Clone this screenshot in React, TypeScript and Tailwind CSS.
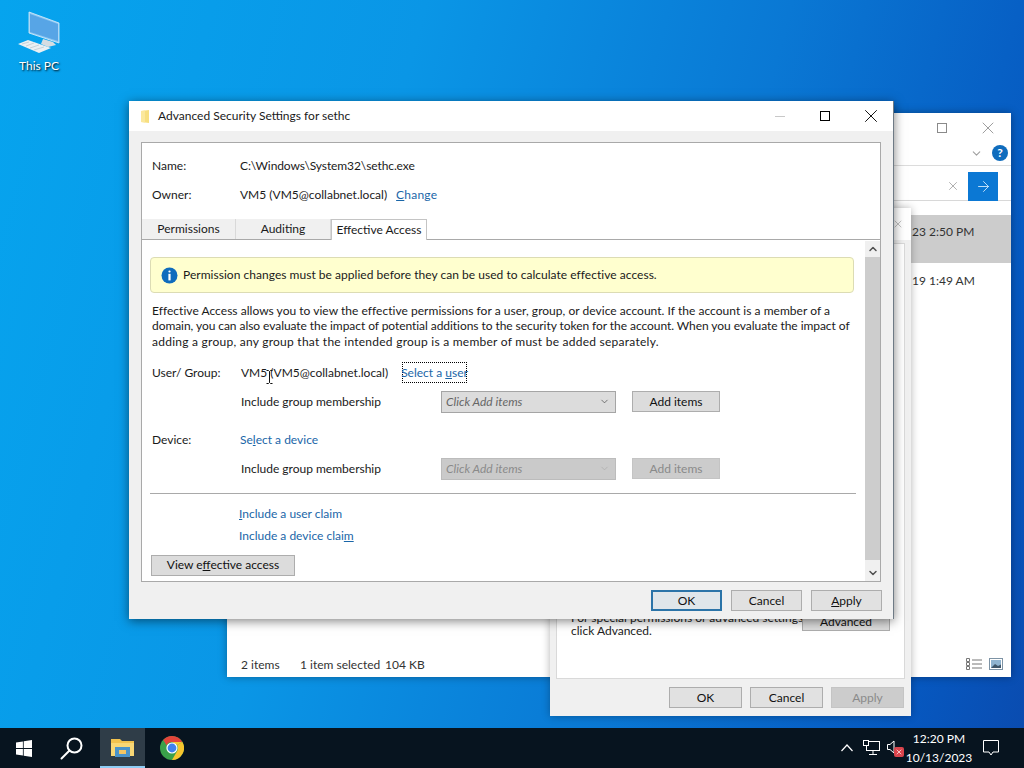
import React from 'react';
import { ArrowRight, ChevronDown, ChevronUp, X } from 'lucide-react';

type Tone = 'normal' | 'soft' | 'disabled' | 'focused';

const toneClasses: Record<Tone, string> = {
  normal: 'border border-[#adadad] bg-[#e1e1e1] text-[#111]',
  soft: 'border border-[#adadad] bg-[#dcdcdc] text-[#111]',
  disabled: 'border border-[#c4c4c4] bg-[#cccccc] text-[#8a8a8a]',
  focused: 'border-2 border-[#2b74a8] bg-[#dfe6ea] text-[#111]',
};

function WinButton({
  children,
  tone = 'normal',
  className = '',
}: {
  children: React.ReactNode;
  tone?: Tone;
  className?: string;
}) {
  return <div className={`flex items-center justify-center ${toneClasses[tone]} ${className}`}>{children}</div>;
}

function InfoIcon() {
  return (
    <svg width="17" height="17" viewBox="0 0 17 17">
      <circle cx="8.5" cy="8.5" r="8" fill="#0f6cbd" />
      <rect x="7.4" y="3.4" width="2.2" height="2.2" rx="1" fill="#fff" />
      <rect x="7.4" y="6.8" width="2.2" height="6.6" fill="#fff" />
    </svg>
  );
}

function ComboBox({ disabled = false }: { disabled?: boolean }) {
  return (
    <div
      className={`flex h-[22px] w-[175px] items-center justify-between border pl-[4px] pr-[5px] italic ${
        disabled ? 'border-[#bcbcbc] bg-[#cacaca] text-[#8a8a8a]' : 'border-[#a5a5a5] bg-[#dcdcdc] text-[#666]'
      }`}
    >
      <span>Click Add items</span>
      <ChevronDown size={11} strokeWidth={1.5} className={disabled ? 'text-[#aaa]' : 'text-[#444]'} />
    </div>
  );
}

function PermissionRow({ disabled = false }: { disabled?: boolean }) {
  return (
    <div className="flex h-[22px] items-center pl-[99px]">
      <span className="w-[200px]">Include group membership</span>
      <ComboBox disabled={disabled} />
      <WinButton tone={disabled ? 'disabled' : 'soft'} className="ml-[16px] h-[21px] w-[88px]">
        Add items
      </WinButton>
    </div>
  );
}

function ThisPcIcon() {
  return (
    <svg width="46" height="42" viewBox="0 0 46 42">
      <path d="M12 1 L42 12 L42 32 L12 22 Z" fill="#8ec8f2" stroke="#dceefb" strokeWidth="0.8" />
      <path d="M13 3 L41 13 L41 30 L13 21 Z" fill="#57a5e6" />
      <path d="M26 28 L36 31 L39 34 L31 36 L24 33 Z" fill="#d5dde2" />
      <path d="M1 33 L11 29 L34 37 L22 42 Z" fill="#eaf0f3" />
      <path d="M5 33 L12 31 M9 35 L17 32 M13 37 L22 34 M17 39 L27 36" stroke="#b8c4cc" strokeWidth="0.7" />
    </svg>
  );
}

function ExplorerWindow() {
  return (
    <div className="absolute left-[227px] top-[113px] flex h-[564px] w-[784px] flex-col bg-white text-[#333] shadow-[0_0_8px_rgba(0,0,0,0.35)]">
      {/* Title bar */}
      <div className="flex h-[29px] items-center justify-end">
        <div className="mr-[13px] flex items-center gap-[31px] text-[#8a8a8a]">
          <div className="h-[10px] w-[10px] border border-[#8a8a8a]" />
          <X size={20} strokeWidth={1} />
        </div>
      </div>
      {/* Ribbon */}
      <div className="flex h-[24px] items-center justify-end gap-[9px] border-b border-[#dcdcdc] pb-[1px] pr-[3px]">
        <ChevronDown size={13} className="text-[#a0a0a0]" />
        <div className="flex h-[16px] w-[16px] items-center justify-center rounded-full bg-[#0f6cbd] text-[12px] font-bold text-white">
          ?
        </div>
      </div>
      {/* Address bar */}
      <div className="mt-[6px] flex h-[29px] items-center justify-end border-b border-[#d8d8d8] pr-[13px]">
        <X size={14} strokeWidth={1.2} className="mr-[8px] text-[#8e8e8e]" />
        <div className="flex h-[29px] w-[30px] items-center justify-center bg-[#0b78d4] text-[#cfe8fb]">
          <ArrowRight size={17} strokeWidth={1.3} />
        </div>
      </div>
      {/* File rows */}
      <div className="mt-[14px] flex h-[48px] justify-end bg-[#cccccc]">
        <span className="w-[99px] pt-[9px] text-[12px] leading-[16px]">23 2:50 PM</span>
      </div>
      <div className="flex h-[26px] items-end justify-end">
        <span className="w-[99px] text-[12px] leading-[16px]">19 1:49 AM</span>
      </div>
      {/* Status bar */}
      <div className="mt-auto flex h-[24px] items-start whitespace-nowrap pl-[14px] pt-[3px] text-[12px]">
        <span className="w-[59px]">2 items</span>
        <span className="w-[85px]">1 item selected</span>
        <span>104 KB</span>
        <div className="ml-auto mr-[8px] flex items-center gap-[7px] pt-[2px]">
          <svg width="16" height="12" viewBox="0 0 16 12" fill="none" stroke="#777" strokeWidth="1">
            <path d="M0.5 0.5 H3.5 V3.5 H0.5 Z M0.5 4.5 H3.5 V7.5 H0.5 Z M0.5 8.5 H3.5 V11.5 H0.5 Z" />
            <path d="M6 2 H16 M6 6 H16 M6 10 H16" />
          </svg>
          <svg width="14" height="12" viewBox="0 0 14 12">
            <rect x="0.5" y="0.5" width="13" height="11" fill="#fff" stroke="#7d93a5" />
            <rect x="2" y="2" width="10" height="8" fill="#8fb3cf" />
            <path d="M2 10 L6 6 L9 8 L12 6.5 V10 Z" fill="#3f5568" />
          </svg>
        </div>
      </div>
    </div>
  );
}

function PropertiesWindow() {
  return (
    <div className="absolute left-[550px] top-[208px] flex h-[508px] w-[361px] flex-col bg-[#f0f0f0] text-[#222] shadow-[0_0_8px_rgba(0,0,0,0.3)]">
      <div className="flex h-[32px] items-center justify-end bg-white pr-[7px] text-[#999]">
        <X size={12} strokeWidth={1.2} />
      </div>
      <div className="mx-[6px] mt-[3px] flex flex-1 flex-col justify-end border border-[#d9d9d9] bg-white pb-[41px] pl-[14px] text-[12px] leading-[13px]">
        <div className="flex items-start justify-between pr-[14px]">
          <p className="w-[230px] whitespace-nowrap">
            For special permissions or advanced settings,
            <br />
            click Advanced.
          </p>
          <WinButton tone="soft" className="h-[20px] w-[88px]">
            Advanced
          </WinButton>
        </div>
      </div>
      <div className="flex h-[37px] items-start justify-end gap-[8px] pr-[7px] pt-[8px] text-[12px]">
        <WinButton className="h-[21px] w-[73px]">OK</WinButton>
        <WinButton className="h-[21px] w-[73px]">Cancel</WinButton>
        <WinButton tone="disabled" className="h-[21px] w-[73px]">
          Apply
        </WinButton>
      </div>
    </div>
  );
}

function SecurityDialog() {
  return (
    <div className="absolute left-[129px] top-[101px] flex h-[518px] w-[765px] flex-col border-r border-[#6e7a85] bg-[#f0f0f0] text-[12px] text-[#1a1a1a] shadow-[0_2px_10px_rgba(0,0,0,0.5)]">
      {/* Title bar */}
      <div className="flex h-[30px] items-center bg-white pl-[12px]">
        <svg width="8" height="13" viewBox="0 0 8 13">
          <path d="M0 1 L8 0 V13 L0 12 Z" fill="#f7df80" />
          <path d="M0 1 L4 0.5 V12.5 L0 12 Z" fill="#fbe89c" />
        </svg>
        <span className="ml-[9px]">Advanced Security Settings for sethc</span>
        <div className="ml-auto flex items-center pr-[11px]">
          <div className="h-px w-[10px] bg-[#c8c8c8]" />
          <div className="ml-[35px] h-[10px] w-[10px] border border-black" />
          <X size={22} strokeWidth={1} className="ml-[30px] text-black" />
        </div>
      </div>

      <div className="mx-[12px] mt-[11px] flex h-[440px] flex-col border border-[#a9a9a9] bg-white">
        {/* Name / owner */}
        <div className="mt-[13px] flex h-[20px] items-center pl-[10px]">
          <span className="w-[88px]">Name:</span>
          <span className="tracking-[-0.1px]">C:\Windows\System32\sethc.exe</span>
        </div>
        <div className="mt-[9px] flex h-[20px] items-center pl-[10px]">
          <span className="w-[88px]">Owner:</span>
          <span>VM5 (VM5@collabnet.local)</span>
          <span className="ml-[9px] tracking-[0.2px] text-[#1a66a8]">
            <u>C</u>hange
          </span>
        </div>

        {/* Tabs */}
        <div className="mt-[14px] flex h-[21px] border-b border-[#a9a9a9]">
          <div className="flex h-[20px] w-[94px] items-center justify-center border-r border-[#d9d9d9] bg-[#f0f0f0]">
            Permissions
          </div>
          <div className="flex h-[20px] w-[95px] items-center justify-center border-r border-[#d9d9d9] bg-[#f0f0f0]">
            Auditing
          </div>
          <div className="z-10 flex h-[21px] w-[96px] items-center justify-center border border-b-0 border-[#c4c4c4] bg-white">
            Effective Access
          </div>
        </div>

        <div className="flex min-h-0 flex-1">
          {/* Tab content */}
          <div className="min-w-0 flex-1">
            <div className="ml-[8px] mt-[17px] flex h-[36px] w-[704px] items-center rounded-[4px] border border-[#dcdcb4] bg-[#ffffcf] pl-[10px]">
              <InfoIcon />
              <span className="ml-[5px] tracking-[0.03px]">
                Permission changes must be applied before they can be used to calculate effective access.
              </span>
            </div>

            <div className="ml-[10px] mt-[10px] whitespace-nowrap leading-[15.3px]">
              <p className="tracking-[0.03px]">
                Effective Access allows you to view the effective permissions for a user, group, or device account. If the account is a member of a
              </p>
              <p className="tracking-[-0.06px]">
                domain, you can also evaluate the impact of potential additions to the security token for the account. When you evaluate the impact of
              </p>
              <p className="tracking-[0.25px]">
                adding a group, any group that the intended group is a member of must be added separately.
              </p>
            </div>

            <div className="mt-[13px] flex h-[22px] items-center pl-[10px]">
              <span className="w-[89px]">User/ Group:</span>
              <span className="w-[161px]">VM5 (VM5@collabnet.local)</span>
              <span className="flex h-[21px] w-[65px] items-center justify-center whitespace-pre border border-dotted border-black text-[#1a66a8]">
                Select a <u>u</u>ser
              </span>
            </div>
            <div className="mt-[7px]">
              <PermissionRow />
            </div>

            <div className="mt-[17px] flex h-[20px] items-center pl-[10px]">
              <span className="w-[88px]">Device:</span>
              <span className="text-[#1a66a8]">
                Se<u>l</u>ect a device
              </span>
            </div>
            <div className="mt-[8px]">
              <PermissionRow disabled />
            </div>

            <div className="ml-[8px] mt-[13px] h-px w-[706px] bg-[#a9a9a9]" />

            <div className="mt-[11px] flex h-[18px] items-center pl-[97px] text-[#1a66a8]">
              <span>
                <u>I</u>nclude a user claim
              </span>
            </div>
            <div className="mt-[4px] flex h-[18px] items-center pl-[97px] text-[#1a66a8]">
              <span>
                Include a device clai<u>m</u>
              </span>
            </div>
            <WinButton tone="soft" className="ml-[9px] mt-[10px] h-[21px] w-[144px]">
              <span>
                View e<u>f</u>fective access
              </span>
            </WinButton>
          </div>

          {/* Scrollbar */}
          <div className="mt-[1px] flex w-[15px] flex-col bg-[#f0f0f0]">
            <div className="flex h-[16px] items-center justify-center">
              <ChevronUp size={12} strokeWidth={3} className="text-[#505050]" />
            </div>
            <div className="h-[303px] bg-[#cdcdcd]" />
            <div className="mt-auto flex h-[16px] items-center justify-center">
              <ChevronDown size={12} strokeWidth={3} className="text-[#505050]" />
            </div>
          </div>
        </div>
      </div>

      {/* Footer buttons */}
      <div className="flex flex-1 items-start justify-end gap-[9px] pr-[11px] pt-[8px]">
        <WinButton tone="focused" className="h-[21px] w-[71px]">
          OK
        </WinButton>
        <WinButton className="h-[21px] w-[71px]">Cancel</WinButton>
        <WinButton className="h-[21px] w-[71px]">
          <span>
            <u>A</u>pply
          </span>
        </WinButton>
      </div>
    </div>
  );
}

function Taskbar() {
  return (
    <div className="flex h-[40px] items-center bg-[#07141f] text-white">
      {/* Start */}
      <div className="flex w-[48px] justify-center">
        <svg width="16" height="17" viewBox="0 0 16 17" fill="#fff">
          <path d="M0 2.4 L6.9 1.4 V8 H0 Z" />
          <path d="M7.7 1.3 L16 0 V8 H7.7 Z" />
          <path d="M0 8.9 H6.9 V15.6 L0 14.6 Z" />
          <path d="M7.7 8.9 H16 V17 L7.7 15.7 Z" />
        </svg>
      </div>
      {/* Search */}
      <div className="flex w-[52px] justify-center pr-[5px]">
        <svg width="23" height="23" viewBox="0 0 23 23" fill="none" stroke="#fff" strokeWidth="2">
          <circle cx="14.5" cy="8.5" r="7" />
          <path d="M9.5 13.5 L1.5 21.5" strokeLinecap="round" />
        </svg>
      </div>
      {/* File Explorer, active */}
      <div className="flex h-[40px] w-[45px] flex-col items-center justify-center border-b-2 border-[#8ecdf5] bg-[#2f3d48]">
        <svg width="23" height="19" viewBox="0 0 23 19">
          <path d="M0 1 H9 L11 3 H23 V18 H0 Z" fill="#f1c24e" />
          <rect x="0" y="5" width="23" height="13" fill="#f8d775" />
          <rect x="4" y="9" width="15" height="10" fill="#4a93c9" />
          <rect x="8" y="12" width="7" height="4" fill="#f3c562" />
        </svg>
      </div>
      {/* Chrome */}
      <div className="flex w-[54px] justify-center">
        <svg width="24" height="24" viewBox="0 0 24 24">
          <circle cx="12" cy="12" r="12" fill="#3aa14a" />
          <path d="M12 0 A12 12 0 0 1 22.4 6 L12 6 A6 6 0 0 0 6.6 9.3 L3.2 3.9 A12 12 0 0 1 12 0 Z" fill="#e2443a" />
          <path d="M22.4 6 A12 12 0 0 1 12 24 L17.2 15 A6 6 0 0 0 17.2 9 Z" fill="#f7c52e" />
          <path d="M22.4 6 L12 6 L17.2 9 Z" fill="#f7c52e" />
          <circle cx="12" cy="12" r="5.6" fill="#fff" />
          <circle cx="12" cy="12" r="4.4" fill="#3f82ee" />
        </svg>
      </div>

      {/* Tray */}
      <div className="ml-auto flex items-center">
        <svg width="12" height="8" viewBox="0 0 12 8" fill="none" stroke="#fff" strokeWidth="1.2" className="mr-[10px]">
          <path d="M0.5 7 L6 1 L11.5 7" />
        </svg>
        <svg width="17" height="16" viewBox="0 0 17 16" fill="none" stroke="#fff" strokeWidth="1" className="mr-[7px]">
          <rect x="3.5" y="1.5" width="13" height="9" fill="#07141f" />
          <rect x="0.5" y="0.5" width="5" height="5" fill="#07141f" />
          <path d="M10 10.5 V14.5 M6 14.5 H14" />
        </svg>
        <div className="relative mr-[5px] h-[16px] w-[17px]">
          <svg width="11" height="14" viewBox="0 0 11 14" fill="none" stroke="#fff" strokeWidth="1">
            <path d="M0.5 4.5 H3 L7 1 V13 L3 9.5 H0.5 Z" />
          </svg>
          <div className="absolute left-[7px] top-[7px] flex h-[10px] w-[10px] items-center justify-center rounded-[2px] bg-[#d9444c]">
            <X size={8} strokeWidth={2.5} className="text-[#ffd9d9]" />
          </div>
        </div>
        <div className="flex w-[60px] flex-col items-center text-[12px] leading-[19px]">
          <span>12:20 PM</span>
          <span>10/13/2023</span>
        </div>
        <svg width="16" height="16" viewBox="0 0 16 16" fill="none" stroke="#fff" strokeWidth="1" className="ml-[14px] mr-[25px]">
          <path d="M0.5 0.5 H15.5 V12 H10 L8 15 L6 12 H0.5 Z" />
        </svg>
      </div>
    </div>
  );
}

export default function App() {
  return (
    <div className="flex h-[768px] w-[1024px] flex-col overflow-hidden font-['Lato',sans-serif]">
      <div className="relative flex-1 bg-[linear-gradient(105deg,#06a4ee_0%,#0a96e6_35%,#0a78d4_65%,#0658c0_90%,#0a4cb0_100%)]">
        {/* Desktop icon */}
        <div className="absolute left-[17px] top-[11px] flex w-[46px] flex-col items-center text-[12px] leading-[16px] text-white [text-shadow:1px_1px_2px_#000]">
          <ThisPcIcon />
          <span className="mr-[2px] mt-[5px] whitespace-nowrap">This PC</span>
        </div>

        <ExplorerWindow />
        <PropertiesWindow />
        <SecurityDialog />

        {/* I-beam mouse cursor */}
        <svg width="7" height="14" viewBox="0 0 7 14" fill="none" stroke="#111" strokeWidth="1" className="absolute left-[266px] top-[370px]">
          <path d="M0.5 0.5 H2.5 L3.5 1.5 L4.5 0.5 H6.5 M3.5 1.5 V12.5 M0.5 13.5 H2.5 L3.5 12.5 L4.5 13.5 H6.5" />
        </svg>
      </div>
      <Taskbar />
    </div>
  );
}
